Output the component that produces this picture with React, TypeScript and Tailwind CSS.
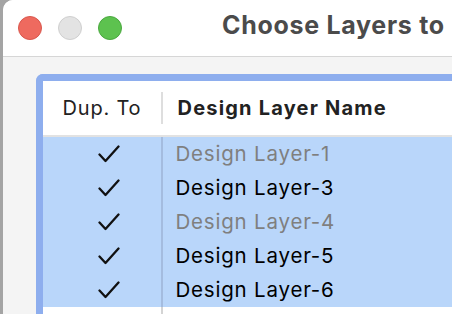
const rows = [
  { name: "Design Layer-1", dim: true },
  { name: "Design Layer-3", dim: false },
  { name: "Design Layer-4", dim: true },
  { name: "Design Layer-5", dim: false },
  { name: "Design Layer-6", dim: false },
];

const Check = () => (
  <svg width="22" height="18" viewBox="0 0 22 18" fill="none">
    <path
      d="M1.5 9.5 L7.5 16 L20.5 1.5"
      stroke="#111"
      strokeWidth="2.3"
      strokeLinecap="round"
      strokeLinejoin="round"
    />
  </svg>
);

const App = () => {
  return (
    <div
      className="w-[452px] h-[314px] overflow-hidden bg-[#a4a4a4] pl-[3px] flex"
      style={{ fontFamily: "Inter, 'Liberation Sans', sans-serif" }}
    >
      <div className="flex-1 flex flex-col bg-[#f4f4f4] rounded-tl-[10px] overflow-hidden">
        {/* title bar */}
        <div className="h-[57px] shrink-0 bg-white border-b border-[#d6d6d6] flex items-center pl-[15px]">
          <div className="flex gap-[16px]">
            <div className="w-[24px] h-[24px] rounded-full bg-[#ee6a5f] border border-[#d9574d]" />
            <div className="w-[24px] h-[24px] rounded-full bg-[#e3e3e3] border border-[#cfcfcf]" />
            <div className="w-[24px] h-[24px] rounded-full bg-[#5dc24f] border border-[#4aa83f]" />
          </div>
          <div className="ml-[100px] -mt-[4px] text-[25px] tracking-[0.7px] font-bold text-[#4b4b4b] whitespace-nowrap">
            Choose Layers to
          </div>
        </div>

        {/* table */}
        <div className="flex-1 pl-[33px] pt-[17px] flex">
          <div className="flex-1 flex flex-col bg-white border-l-[7px] border-t-[7px] border-[#8eaeee] rounded-tl-[7px] overflow-hidden">
            <div className="h-[56px] shrink-0 flex items-center border-b-2 border-[#e2e2e2] text-[20px] text-[#222]">
              <div className="w-[118px] shrink-0 text-center tracking-[0.8px]">Dup. To</div>
              <div className="w-[1.5px] h-[32px] bg-[#dedede]" />
              <div className="pl-[15px] font-bold tracking-[1.2px] whitespace-nowrap">Design Layer Name</div>
            </div>
            {rows.map((r) => (
              <div key={r.name} className="h-[34px] shrink-0 flex bg-[#b9d6fa] text-[20.5px] tracking-[0.8px]">
                <div className="w-[118px] shrink-0 pl-[55px] flex items-center">
                  <Check />
                </div>
                <div className="w-[1.5px] bg-[#a4bcdf]" />
                <div
                  className={
                    "pl-[13px] flex items-center whitespace-nowrap " +
                    (r.dim ? "text-[#7f7f7f]" : "text-black")
                  }
                >
                  {r.name}
                </div>
              </div>
            ))}
            <div className="flex-1 flex">
              <div className="w-[118px] shrink-0" />
              <div className="w-[1.5px] bg-[#d4d4d4]" />
            </div>
          </div>
        </div>
      </div>
    </div>
  );
};

export default App;
